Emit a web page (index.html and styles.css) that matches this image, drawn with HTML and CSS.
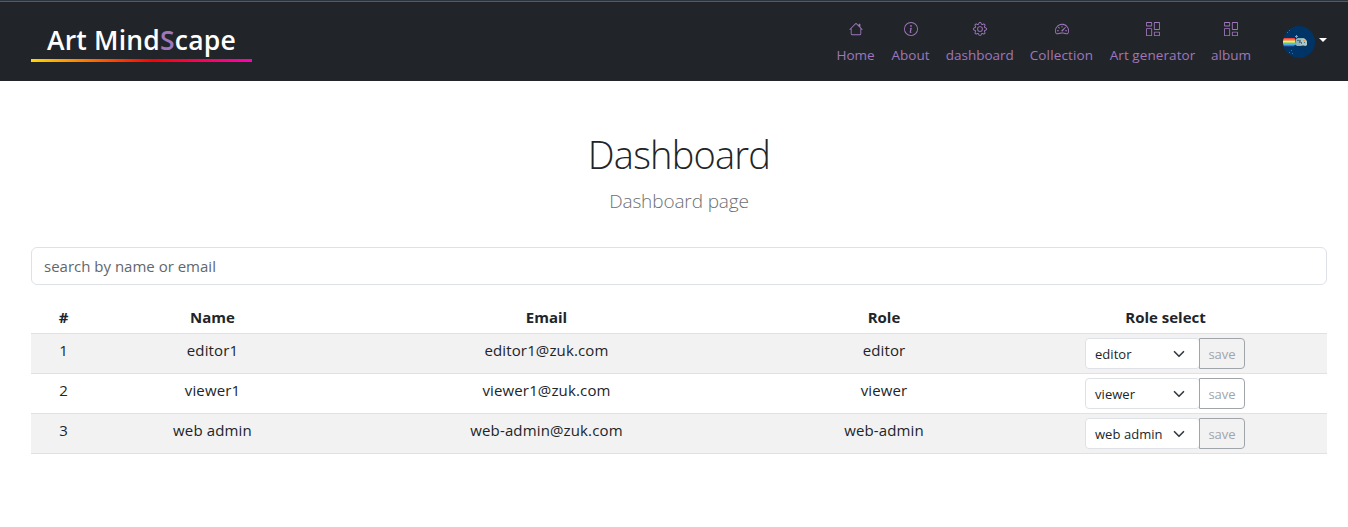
FILE: index.html
```html
<!DOCTYPE html>
<html lang="en">
<head>
<meta charset="utf-8">
<title>Art MindScape</title>
<link rel="stylesheet" href="styles.css">
</head>
<body>
<svg class="sprite" aria-hidden="true">
  <symbol id="house" viewBox="0 0 16 16"><path d="M8.707 1.5a1 1 0 0 0-1.414 0L.646 8.146a.5.5 0 0 0 .708.708L2 8.207V13.5A1.5 1.5 0 0 0 3.5 15h9a1.5 1.5 0 0 0 1.5-1.5V8.207l.646.647a.5.5 0 0 0 .708-.708L13 5.793V2.5a.5.5 0 0 0-.5-.5h-1a.5.5 0 0 0-.5.5v1.293L8.707 1.5ZM13 7.207V13.5a.5.5 0 0 1-.5.5h-9a.5.5 0 0 1-.5-.5V7.207l5-5 5 5Z"/></symbol>
  <symbol id="info" viewBox="0 0 16 16"><path d="M8 15A7 7 0 1 1 8 1a7 7 0 0 1 0 14zm0 1A8 8 0 1 0 8 0a8 8 0 0 0 0 16z"/><path d="m8.930 6.588-2.290.287-.082.380.450.083c.294.070.352.176.288.469l-.738 3.468c-.194.897.105 1.319.808 1.319.545 0 1.178-.252 1.465-.598l.088-.416c-.200.176-.492.246-.686.246-.275 0-.375-.193-.304-.533L8.930 6.588zM9 4.500a1 1 0 1 1-2 0 1 1 0 0 1 2 0z"/></symbol>
  <symbol id="gear" viewBox="0 0 16 16"><path d="M8 4.754a3.246 3.246 0 1 0 0 6.492 3.246 3.246 0 0 0 0-6.492zM5.754 8a2.246 2.246 0 1 1 4.492 0 2.246 2.246 0 0 1-4.492 0z"/><path d="M9.796 1.343c-.527-1.790-3.065-1.790-3.592 0l-.094.319a.873.873 0 0 1-1.255.520l-.292-.160c-1.640-.892-3.433.902-2.540 2.541l.159.292a.873.873 0 0 1-.520 1.255l-.319.094c-1.790.527-1.790 3.065 0 3.592l.319.094a.873.873 0 0 1 .520 1.255l-.160.292c-.892 1.640.901 3.434 2.541 2.540l.292-.159a.873.873 0 0 1 1.255.520l.094.319c.527 1.790 3.065 1.790 3.592 0l.094-.319a.873.873 0 0 1 1.255-.520l.292.160c1.640.893 3.434-.902 2.540-2.541l-.159-.292a.873.873 0 0 1 .520-1.255l.319-.094c1.790-.527 1.790-3.065 0-3.592l-.319-.094a.873.873 0 0 1-.520-1.255l.160-.292c.893-1.640-.902-3.433-2.541-2.540l-.292.159a.873.873 0 0 1-1.255-.520l-.094-.319zm-2.633.283c.246-.835 1.428-.835 1.674 0l.094.319a1.873 1.873 0 0 0 2.693 1.115l.291-.160c.764-.415 1.600.420 1.184 1.185l-.159.292a1.873 1.873 0 0 0 1.116 2.692l.318.094c.835.246.835 1.428 0 1.674l-.319.094a1.873 1.873 0 0 0-1.115 2.693l.160.291c.415.764-.420 1.600-1.185 1.184l-.291-.159a1.873 1.873 0 0 0-2.693 1.116l-.094.318c-.246.835-1.428.835-1.674 0l-.094-.319a1.873 1.873 0 0 0-2.692-1.115l-.292.160c-.764.415-1.600-.420-1.184-1.185l.159-.291A1.873 1.873 0 0 0 1.945 8.930l-.319-.094c-.835-.246-.835-1.428 0-1.674l.319-.094A1.873 1.873 0 0 0 3.060 4.377l-.160-.292c-.415-.764.420-1.600 1.185-1.184l.292.159a1.873 1.873 0 0 0 2.692-1.115l.094-.319z"/></symbol>
  <symbol id="meter" viewBox="0 0 16 16"><path d="M8 4a.5.5 0 0 1 .5.5V6a.5.5 0 0 1-1 0V4.500A.5.5 0 0 1 8 4zM3.732 5.732a.5.5 0 0 1 .707 0l.915.914a.5.5 0 1 1-.708.708l-.914-.915a.5.5 0 0 1 0-.707zM2 10a.5.5 0 0 1 .5-.5h1.586a.5.5 0 0 1 0 1H2.500A.5.5 0 0 1 2 10zm9.500 0a.5.5 0 0 1 .5-.5h1.500a.5.5 0 0 1 0 1H12a.5.5 0 0 1-.5-.5zm.754-4.246a.389.389 0 0 0-.527-.020L7.547 9.310a.910.910 0 1 0 1.302 1.258l3.434-4.297a.389.389 0 0 0-.029-.518z"/><path fill-rule="evenodd" d="M0 10a8 8 0 1 1 15.547 2.661c-.442 1.253-1.845 1.602-2.932 1.250C11.309 13.488 9.475 13 8 13c-1.474 0-3.310.488-4.615.911-1.087.352-2.490.003-2.932-1.250A7.988 7.988 0 0 1 0 10zm8-7a7 7 0 0 0-6.603 9.329c.203.575.923.876 1.680.630C4.397 12.533 6.358 12 8 12s3.604.532 4.923.960c.757.245 1.477-.056 1.680-.631A7 7 0 0 0 8 3z"/></symbol>
  <symbol id="grid" viewBox="0 0 16 16"><path d="M6 1v3H1V1h5zM1 0a1 1 0 0 0-1 1v3a1 1 0 0 0 1 1h5a1 1 0 0 0 1-1V1a1 1 0 0 0-1-1H1zm14 12v3h-5v-3h5zm-5-1a1 1 0 0 0-1 1v3a1 1 0 0 0 1 1h5a1 1 0 0 0 1-1v-3a1 1 0 0 0-1-1h-5zM6 8v7H1V8h5zM1 7a1 1 0 0 0-1 1v7a1 1 0 0 0 1 1h5a1 1 0 0 0 1-1V8a1 1 0 0 0-1-1H1zm14-6v7h-5V1h5zm-5-1a1 1 0 0 0-1 1v7a1 1 0 0 0 1 1h5a1 1 0 0 0 1-1V1a1 1 0 0 0-1-1h-5z"/></symbol>
  <symbol id="chevron" viewBox="0 0 16 16"><path fill="none" stroke="#343a40" stroke-linecap="round" stroke-linejoin="round" stroke-width="2.2" d="m2 5 6 6 6-6"/></symbol>
</svg>
<header class="navbar">
  <a class="brand"><span class="brand-text">Art Mind<span class="accent">S</span>cape</span></a>
  <nav class="nav">
    <a class="nav-link home"><svg class="icon"><use href="#house"/></svg><span>Home</span></a>
    <a class="nav-link about"><svg class="icon"><use href="#info"/></svg><span>About</span></a>
    <a class="nav-link dash"><svg class="icon"><use href="#gear"/></svg><span>dashboard</span></a>
    <a class="nav-link coll"><svg class="icon"><use href="#meter"/></svg><span>Collection</span></a>
    <a class="nav-link gen"><svg class="icon"><use href="#grid"/></svg><span>Art generator</span></a>
    <a class="nav-link album"><svg class="icon"><use href="#grid"/></svg><span>album</span></a>
  </nav>
  <div class="user">
    <svg class="avatar" viewBox="0 0 32 32">
      <circle cx="16" cy="16" r="16" fill="#003466"/>
      <path fill="#f0483e" d="M.8 12h11v2H.4z"/><path fill="#f9a55a" d="M.3 13.500h12v2H0z"/><path fill="#f5ee68" d="M0 15h12v2H0z"/><path fill="#5fd068" d="M0 16.500h12v1.500H0z"/><path fill="#4bb1e8" d="M.2 17.800h12v1.500H.4z"/><path fill="#7b5ac0" d="M.5 19h11v1.300H.9z"/>
      <path fill="#8fb3ba" d="M13 13l2-1h6l3 3v4l-2 1h-9l-1-2z"/><path fill="#a9c8cc" d="M17 14l2-1h3l2 3v3l-2 1h-3l-2-2z"/><path fill="#26363f" d="M11.500 19h2v1h-2zm5-5h1v3h-1zm2 5.500h3v1h-3z"/><path fill="#54727b" d="M14 14h2v1h-2zm4 2h1v2h-1zm3 0h1v1h-1z"/><path fill="#e8a04c" d="M20 14h2v1h-2z"/>
      <path fill="#7f9dbb" d="M13 9h1v3h-1zm-1 1h3v1h-3z"/><path fill="#426b93" d="M4 6h1v1H4zm2-2h1v1H6zm2 20h1v1H8zm-2 2h1v1H6zm3 1h1v1H9z"/>
    </svg>
    <span class="caret"></span>
  </div>
</header>
<main class="content">
  <h1 class="title"><span>Dashboard</span></h1>
  <p class="lead"><span>Dashboard page</span></p>
  <input class="search" type="text" placeholder="search by name or email">
  <table class="table">
    <colgroup><col class="c1"><col class="c2"><col class="c3"><col class="c4"><col class="c5"></colgroup>
    <thead><tr><th>#</th><th>Name</th><th>Email</th><th>Role</th><th>Role select</th></tr></thead>
    <tbody>
      <tr><td>1</td><td>editor1</td><td>editor1@zuk.com</td><td>editor</td><td><div class="group"><div class="select"><span>editor</span><svg class="chev"><use href="#chevron"/></svg></div><button class="save" disabled>save</button></div></td></tr>
      <tr><td>2</td><td>viewer1</td><td>viewer1@zuk.com</td><td>viewer</td><td><div class="group"><div class="select"><span>viewer</span><svg class="chev"><use href="#chevron"/></svg></div><button class="save" disabled>save</button></div></td></tr>
      <tr><td>3</td><td>web admin</td><td>web-admin@zuk.com</td><td>web-admin</td><td><div class="group"><div class="select"><span>web admin</span><svg class="chev"><use href="#chevron"/></svg></div><button class="save" disabled>save</button></div></td></tr>
    </tbody>
  </table>
</main>
</body>
</html>
```
FILE: styles.css
```css
* { box-sizing: border-box; }
body {
  margin: 0;
  height: 527px;
  overflow: hidden;
  background: #fff;
  color: #212529;
  font: 15px/24px "Open Sans", "Noto Sans", sans-serif;
}
.sprite { display: none; }
.navbar {
  display: flex;
  align-items: flex-start;
  height: 81px;
  background: #212529;
  border-top: 1px solid #2b343d;
  box-shadow: inset 0 1px #4f5c68;
  padding: 0 21px 0 31px;
}
.brand {
  width: 221px;
  height: 61px;
  padding: 20px 0 0 16px;
  background: linear-gradient(90deg, #ffd700, #f00 55%, #ff00b4) left bottom / 100% 3px no-repeat;
  color: #fff;
  font-size: 26.500px;
  font-weight: 600;
  line-height: 38px;
  letter-spacing: .2px;
  white-space: nowrap;
}
.accent { color: #a076bd; }
.nav {
  display: flex;
  gap: 16px;
  margin-left: auto;
  padding-top: 21px;
  color: #a076bd;
  font-size: 13.500px;
  line-height: 22px;
}
.nav-link {
  display: flex;
  flex-direction: column;
  align-items: center;
  gap: 8px;
  white-space: nowrap;
}
.icon { width: 14px; height: 14px; fill: currentColor; }
.home, .about { width: 39px; }
.album { width: 39px; }
.dash { width: 67.500px; }
.coll { width: 64px; letter-spacing: .15px; }
.gen { width: 86px; letter-spacing: .08px; }
.user {
  display: flex;
  align-items: center;
  gap: 4px;
  padding-top: 25px;
  margin-left: 32.500px;
}
.avatar { width: 32px; height: 32px; }
.caret {
  border: 4px solid transparent;
  border-top-color: #fff;
  border-bottom: 0;
  margin-top: -4px;
}
.content { padding: 46px 21px 0 31px; }
.title {
  margin: 0;
  height: 56px;
  font-size: 38px;
  font-weight: 300;
  line-height: 54px;
  letter-spacing: -.8px;
  text-align: center;
}
.lead {
  margin: 0 0 31px;
  padding-top: 3px;
  height: 33px;
  color: #6c7074;
  font-size: 19px;
  font-weight: 300;
  line-height: 30px;
  letter-spacing: -.12px;
  text-align: center;
}
.search {
  display: block;
  width: 100%;
  height: 38px;
  padding: 0 12px;
  border: 1px solid #dee2e6;
  border-radius: 6px;
  font: inherit;
}
.search::placeholder { color: #62676c; opacity: 1; }
.table {
  width: 1296px;
  margin-top: 16px;
  table-layout: fixed;
  border-spacing: 0;
  text-align: center;
}
.c1 { width: 65px; }
.c2 { width: 233px; }
.c3 { width: 435px; }
.c4 { width: 240px; }
.c5 { width: 323px; }
.table th, .table td {
  padding: 4px;
  border-bottom: 1px solid #dee2e6;
  vertical-align: top;
}
.table th { height: 33px; font-weight: 700; }
.table td { height: 40px; letter-spacing: .14px; }
.table tbody tr:nth-child(odd) { background: #f2f2f2; }
.group { display: flex; width: 160px; margin: 0 0 0 77px; letter-spacing: .05px; }
.select {
  display: flex;
  align-items: center;
  justify-content: space-between;
  width: 115px;
  height: 31px;
  margin-right: -1px;
  padding: 0 14px 0 9px;
  border: 1px solid #dee2e6;
  border-radius: 4px;
  background: #fff;
  font-size: 13px;
  white-space: nowrap;
}
.chev { width: 12px; height: 12px; }
.save {
  width: 46px;
  height: 31px;
  padding: 0;
  border: 1px solid #a0a5aa;
  border-radius: 0 4px 4px 0;
  background: transparent;
  color: #a0a5aa;
  font: 13px "Open Sans", "Noto Sans", sans-serif;
}
```
